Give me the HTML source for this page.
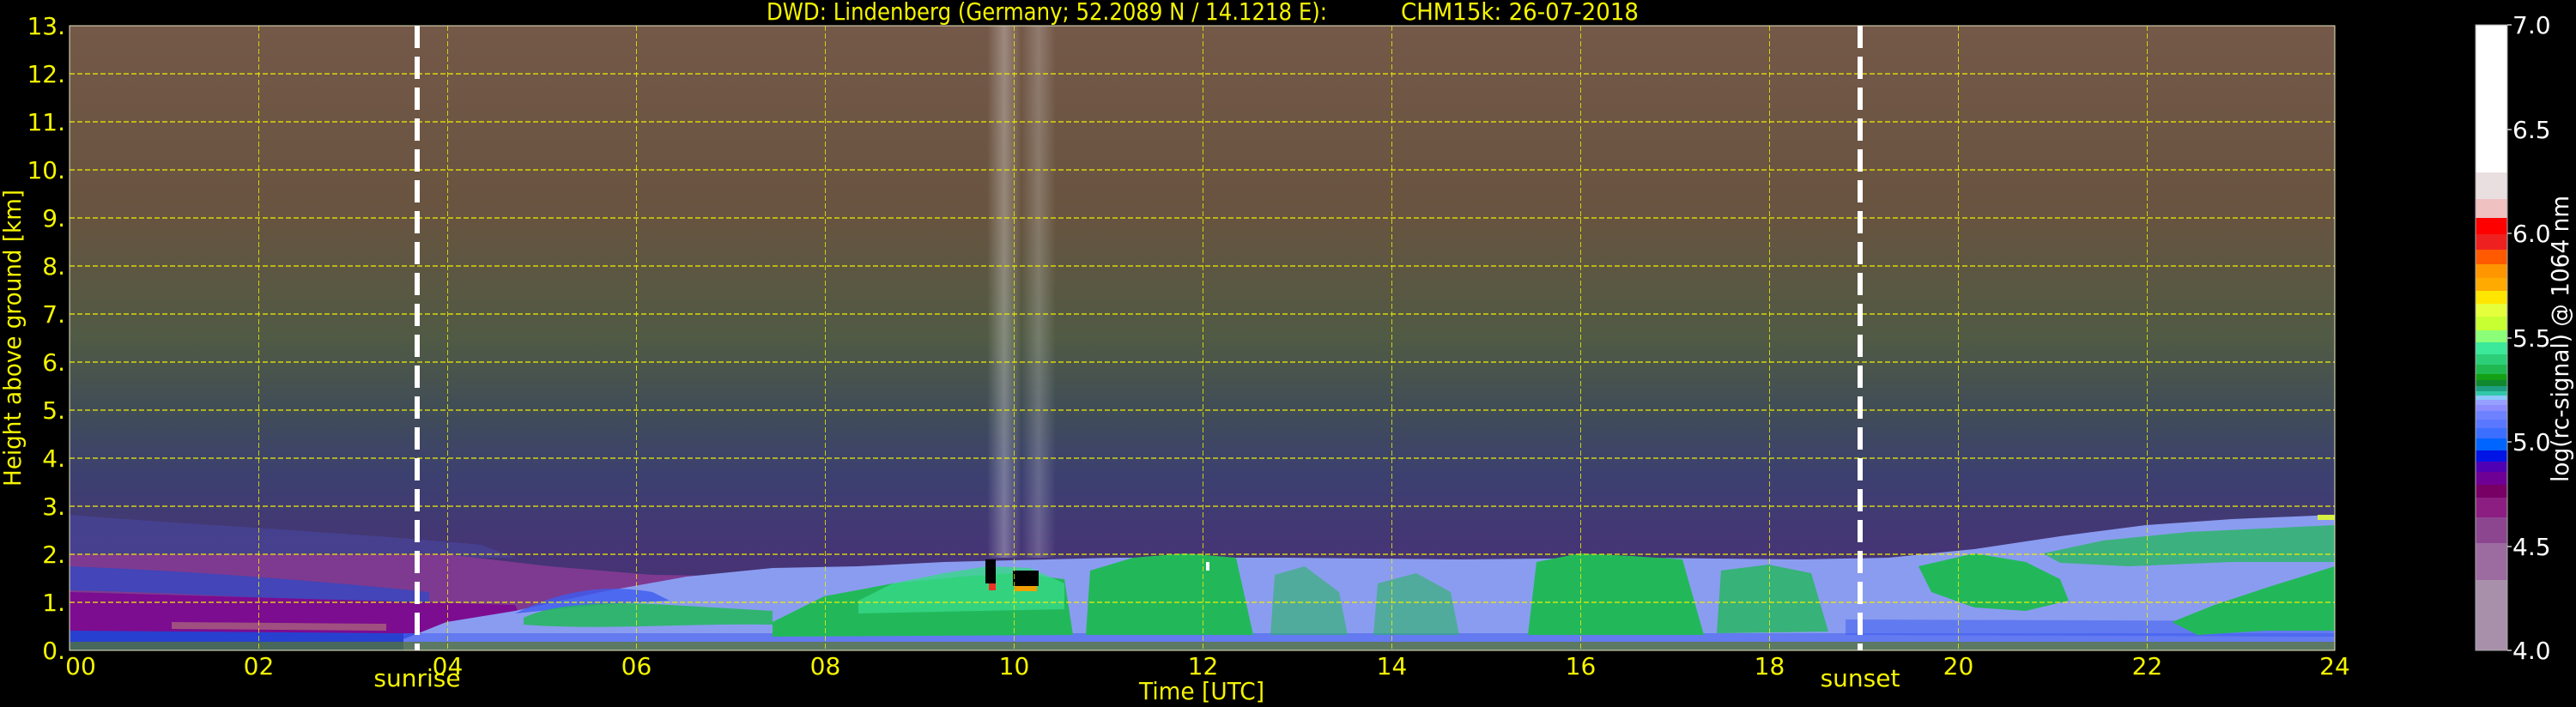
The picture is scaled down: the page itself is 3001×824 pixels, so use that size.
<!DOCTYPE html>
<html><head><meta charset="utf-8"><style>
html,body{margin:0;padding:0;background:#000;width:3001px;height:824px;overflow:hidden}
svg{display:block}
</style></head><body>
<svg width="3001" height="824" viewBox="0 0 3001 824" xmlns="http://www.w3.org/2000/svg" font-family="'DejaVu Sans','Liberation Sans',sans-serif">
<defs>
<linearGradient id="bg" x1="0" y1="30" x2="0" y2="758" gradientUnits="userSpaceOnUse">
<stop offset="0" stop-color="#745848"/>
<stop offset="0.3" stop-color="#685440"/>
<stop offset="0.5" stop-color="#505a44"/>
<stop offset="0.62" stop-color="#404c58"/>
<stop offset="0.72" stop-color="#3c4070"/>
<stop offset="0.85" stop-color="#463476"/>
<stop offset="1" stop-color="#443070"/>
</linearGradient>
<linearGradient id="wh" x1="0" x2="1" y1="0" y2="0">
<stop offset="0" stop-color="#fff" stop-opacity="0"/>
<stop offset="0.5" stop-color="#fff" stop-opacity="0.3"/>
<stop offset="1" stop-color="#fff" stop-opacity="0"/>
</linearGradient>
</defs>
<rect x="0" y="0" width="3001" height="824" fill="#000"/>
<rect x="81" y="30" width="2639" height="728" fill="url(#bg)"/>
<rect x="1150" y="30" width="40" height="620" fill="url(#wh)"/>
<rect x="1190" y="30" width="40" height="620" fill="url(#wh)" opacity="0.7"/>
<!-- left nocturnal layers -->
<path d="M81 600 C200 610 400 620 560 635 L600 650 L81 650 Z" fill="#4a48a0" opacity="0.6"/>
<path d="M81 646 L520 646 L640 660 L760 670 L900 672 L900 758 L81 758 Z" fill="#7e3a90"/>
<path d="M81 660 C200 665 320 672 500 690 L500 705 C350 700 200 690 81 688 Z" fill="#3848c0" opacity="0.85"/>
<path d="M81 690 L600 705 L620 745 L81 745 Z" fill="#7c0c90"/>
<path d="M200 725 L450 727 L450 735 L200 733 Z" fill="#a05080"/>
<path d="M81 735 L700 740 L700 758 L81 758 Z" fill="#2840d0"/>
<!-- light blue boundary layer -->
<path d="M470 745 L520 725 L600 712 L700 690 L800 672 L900 662 L1000 660 L1100 655 L1300 650 L1500 650 L1700 652 L1900 650 L2100 652 L2200 650 L2300 640 L2400 625 L2500 612 L2600 605 L2720 600 L2720 758 L470 758 Z" fill="#8a9cf0"/>
<path d="M600 715 C650 690 700 680 760 690 L780 700 L700 705 Z" fill="#3c5cf0" opacity="0.8"/>
<path d="M470 738 L2720 738 L2720 748 L470 748 Z" fill="#4a64f0" opacity="0.6"/>
<path d="M2150 722 L2720 724 L2720 742 L2150 740 Z" fill="#3a58f0" opacity="0.5"/>
<!-- green aerosol patches -->
<g fill="#22b85a">
<path d="M610 720 C640 705 700 700 780 705 L900 712 L900 728 C800 726 700 735 610 728 Z" opacity="0.85"/>
<path d="M900 725 L960 695 L1040 680 L1120 672 L1180 668 L1240 675 L1250 740 L900 742 Z"/>
<path d="M1000 700 L1040 680 L1100 668 L1150 660 L1200 662 L1240 680 L1240 710 L1000 715 Z" fill="#38d888" opacity="0.8"/>
<path d="M1265 740 L1270 665 L1320 650 L1380 645 L1440 650 L1460 740 Z"/>
<path d="M1480 740 L1485 670 L1520 660 L1560 690 L1570 740 Z" opacity="0.55"/>
<path d="M1600 740 L1605 680 L1650 668 L1690 690 L1700 740 Z" opacity="0.55"/>
<path d="M1780 740 L1790 655 L1840 645 L1900 648 L1960 652 L1985 740 Z"/>
<path d="M2000 738 L2005 665 L2060 658 L2110 668 L2130 736 Z" opacity="0.8"/>
<path d="M2235 660 L2300 645 L2360 655 L2400 675 L2410 700 L2360 712 L2300 708 L2250 690 Z"/>
<path d="M2380 645 L2450 630 L2550 620 L2720 612 L2720 655 L2600 655 L2480 660 L2400 656 Z" opacity="0.75"/>
<path d="M2530 725 L2580 705 L2640 685 L2720 660 L2720 735 L2640 735 L2560 740 Z"/>
</g>
<rect x="2700" y="600" width="20" height="6" fill="#d8f040"/>
<rect x="1148" y="652" width="12" height="28" fill="#000"/>
<rect x="1152" y="680" width="8" height="8" fill="#f03020"/>
<rect x="1180" y="665" width="30" height="18" fill="#000"/>
<rect x="1182" y="683" width="26" height="6" fill="#f0a000"/>
<rect x="1405" y="655" width="4" height="10" fill="#fff"/>
<rect x="81" y="748" width="2639" height="10" fill="#507040" opacity="0.8"/>
<!-- grid -->
<g stroke="#f0f000" stroke-width="1.3" stroke-dasharray="6,3" fill="none">
<path d="M81 702H2720M81 646H2720M81 590H2720M81 534H2720M81 478H2720M81 422H2720M81 366H2720M81 310H2720M81 254H2720M81 198H2720M81 142H2720M81 86H2720"/>
</g>
<g stroke="#f0f000" stroke-width="1" stroke-dasharray="6,3" fill="none" opacity="0.8">
<path d="M301.5 30V758M521.5 30V758M741.5 30V758M961.5 30V758M1181.5 30V758M1401.5 30V758M1621.5 30V758M1841.5 30V758M2061.5 30V758M2281.5 30V758M2501.5 30V758"/>
</g>
<rect x="81" y="30" width="2639" height="728" fill="none" stroke="#e8e8c0" stroke-width="1"/>
<g stroke="#fff" stroke-width="6" stroke-dasharray="26,10">
<line x1="486" y1="30" x2="486" y2="758"/>
<line x1="2167" y1="30" x2="2167" y2="758"/>
</g>
<g fill="#f5f500" font-size="28">
<text x="893" y="23" textLength="653" lengthAdjust="spacingAndGlyphs">DWD: Lindenberg (Germany; 52.2089 N / 14.1218 E):</text>
<text x="1632" y="23" textLength="277" lengthAdjust="spacingAndGlyphs">CHM15k: 26-07-2018</text>
<g text-anchor="end">
<text x="76" y="40">13.</text><text x="76" y="96">12.</text><text x="76" y="152">11.</text><text x="76" y="208">10.</text>
<text x="76" y="264">9.</text><text x="76" y="320">8.</text><text x="76" y="376">7.</text><text x="76" y="432">6.</text>
<text x="76" y="488">5.</text><text x="76" y="544">4.</text><text x="76" y="600">3.</text><text x="76" y="656">2.</text>
<text x="76" y="712">1.</text><text x="76" y="768">0.</text>
</g>
<g text-anchor="middle">
<text x="94" y="786">00</text><text x="301.5" y="786">02</text><text x="521.5" y="786">04</text><text x="741.5" y="786">06</text>
<text x="961.5" y="786">08</text><text x="1181.5" y="786">10</text><text x="1401.5" y="786">12</text><text x="1621.5" y="786">14</text>
<text x="1841.5" y="786">16</text><text x="2061.5" y="786">18</text><text x="2281.5" y="786">20</text><text x="2501.5" y="786">22</text>
<text x="2720" y="786">24</text>
<text x="486" y="800">sunrise</text>
<text x="2167" y="800">sunset</text>
<text x="1400" y="815" textLength="146" lengthAdjust="spacingAndGlyphs">Time [UTC]</text>
</g>
<text transform="translate(24,394) rotate(-90)" text-anchor="middle" textLength="346" lengthAdjust="spacingAndGlyphs">Height above ground [km]</text>
</g>
<g>
<rect x="2884" y="29" width="37" height="173" fill="#ffffff"/>
<rect x="2884" y="201" width="37" height="32" fill="#eadfe0"/>
<rect x="2884" y="232" width="37" height="23" fill="#efc1c1"/>
<rect x="2884" y="254" width="37" height="20" fill="#ff0000"/>
<rect x="2884" y="273" width="37" height="19" fill="#ef2020"/>
<rect x="2884" y="291" width="37" height="18" fill="#ff5a00"/>
<rect x="2884" y="308" width="37" height="17" fill="#ff9600"/>
<rect x="2884" y="324" width="37" height="16" fill="#ffaa00"/>
<rect x="2884" y="339" width="37" height="16" fill="#ffe600"/>
<rect x="2884" y="354" width="37" height="16" fill="#e6ff3c"/>
<rect x="2884" y="369" width="37" height="17" fill="#c8ff32"/>
<rect x="2884" y="385" width="37" height="15" fill="#8cff78"/>
<rect x="2884" y="399" width="37" height="15" fill="#3ce89a"/>
<rect x="2884" y="413" width="37" height="13" fill="#2ccf78"/>
<rect x="2884" y="425" width="37" height="12" fill="#20b850"/>
<rect x="2884" y="436" width="37" height="8" fill="#14a014"/>
<rect x="2884" y="443" width="37" height="8" fill="#108830"/>
<rect x="2884" y="450" width="37" height="7" fill="#1e9e82"/>
<rect x="2884" y="456" width="37" height="6" fill="#32c8aa"/>
<rect x="2884" y="461" width="37" height="6" fill="#8cc8ff"/>
<rect x="2884" y="466" width="37" height="7" fill="#96a0ff"/>
<rect x="2884" y="472" width="37" height="8" fill="#8c8cff"/>
<rect x="2884" y="479" width="37" height="11" fill="#6e82ff"/>
<rect x="2884" y="489" width="37" height="11" fill="#5a78ff"/>
<rect x="2884" y="499" width="37" height="13" fill="#3c6eff"/>
<rect x="2884" y="511" width="37" height="15" fill="#0064ff"/>
<rect x="2884" y="525" width="37" height="14" fill="#0014e6"/>
<rect x="2884" y="538" width="37" height="13" fill="#5000b4"/>
<rect x="2884" y="550" width="37" height="16" fill="#6e0096"/>
<rect x="2884" y="565" width="37" height="16" fill="#780064"/>
<rect x="2884" y="580" width="37" height="24" fill="#8c1e82"/>
<rect x="2884" y="603" width="37" height="31" fill="#8c4690"/>
<rect x="2884" y="633" width="37" height="44" fill="#9c6ba0"/>
<rect x="2884" y="676" width="37" height="82" fill="#a990aa"/>
<rect x="2884" y="29" width="37" height="729" fill="none" stroke="#aaa" stroke-width="1"/>
</g>
<g fill="#fff" font-size="28">
<text x="2927" y="39">7.0</text>
<text x="2927" y="161">6.5</text>
<text x="2927" y="282">6.0</text>
<text x="2927" y="404">5.5</text>
<text x="2927" y="525">5.0</text>
<text x="2927" y="647">4.5</text>
<text x="2927" y="768">4.0</text>
<text transform="translate(2992,395) rotate(-90)" text-anchor="middle" textLength="334" lengthAdjust="spacingAndGlyphs">log(rc-signal) @ 1064 nm</text>
</g>
<g stroke="#ccc" stroke-width="1.5">
<path d="M2921 29h5M2921 151h5M2921 272h5M2921 394h5M2921 515h5M2921 637h5M2921 758h5"/>
</g>
</svg>
</body></html>
